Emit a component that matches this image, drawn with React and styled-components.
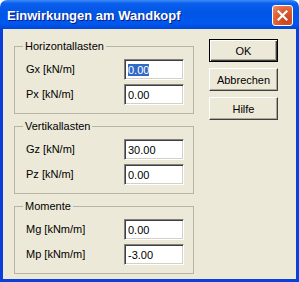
import React from 'react';
import styled, { createGlobalStyle } from 'styled-components';

const Global = createGlobalStyle`
  html, body { margin: 0; padding: 0; background: #ffffff; }
  * { box-sizing: border-box; }
`;

const groups = [
  { title: 'Horizontallasten', rows: [['Gx [kN/m]', '0.00', true], ['Px [kN/m]', '0.00']] },
  { title: 'Vertikallasten', rows: [['Gz [kN/m]', '30.00'], ['Pz [kN/m]', '0.00']] },
  { title: 'Momente', rows: [['Mg [kNm/m]', '0.00'], ['Mp [kNm/m]', '-3.00']] },
];

const App = () => {
  return (
    <>
      <Global />
      <Window>
        <TitleBar>
          <Title>Einwirkungen am Wandkopf</Title>
          <CloseButton>
            <svg width="11" height="11" viewBox="0 0 11 11">
              <path d="M1.5 1.5 L9.5 9.5 M9.5 1.5 L1.5 9.5" stroke="#fff" strokeWidth="2.2" strokeLinecap="square" />
            </svg>
          </CloseButton>
        </TitleBar>
        <Frame>
          <Groups>
            {groups.map((g) => (
              <Group key={g.title}>
                <Legend>{g.title}</Legend>
                {g.rows.map(([label, value, selected]) => (
                  <Row key={label}>
                    <Label>{label}</Label>
                    <Field>
                      {selected ? <Selection>{value}</Selection> : value}
                    </Field>
                  </Row>
                ))}
              </Group>
            ))}
          </Groups>
          <Buttons>
            <Button $default>OK</Button>
            <Button>Abbrechen</Button>
            <Button>Hilfe</Button>
          </Buttons>
        </Frame>
      </Window>
    </>
  );
};

const Window = styled.div`
width: 299px;
height: 282px;
display: flex;
flex-direction: column;
font-family: "Liberation Sans", Arial, sans-serif;
font-size: 11px;
color: #000;
`;

const TitleBar = styled.div`
height: 29px;
flex: none;
display: flex;
align-items: center;
justify-content: space-between;
padding: 1px 6px 0 7px;
border-radius: 7px 7px 0 0;
background: linear-gradient(to bottom, #3f8cf3 0%, #0a5fef 12%, #0055e5 45%, #0058ee 80%, #0047d8 100%);
`;

const Title = styled.span`
color: #fff;
font-weight: bold;
font-size: 13px;
text-shadow: 1px 1px 0 #0a1a80;
`;

const CloseButton = styled.div`
width: 21px;
height: 21px;
border: 1px solid #fff;
border-radius: 3px;
background: radial-gradient(circle at 70% 75%, #c8401a 0%, #de5f34 55%, #ee9070 100%);
display: flex;
align-items: center;
justify-content: center;
`;

const Frame = styled.div`
flex: 1;
display: flex;
gap: 15px;
padding: 10px 0 0 11px;
background: #ece9d8;
border: 3px solid #0a3fd9;
border-top: none;
`;

const Groups = styled.div`
display: flex;
flex-direction: column;
gap: 6px;
width: 180px;
padding-top: 1px;
`;

const Group = styled.fieldset`
margin: 0;
padding: 6px 9px 8px 11px;
border: 1px solid #b8b5a6;
display: flex;
flex-direction: column;
gap: 4px;
`;

const Legend = styled.legend`
padding: 0 2px;
margin-left: -3px;
line-height: 13px;
`;

const Row = styled.div`
display: flex;
align-items: center;
justify-content: space-between;
`;

const Label = styled.span`
line-height: 13px;
`;

const Field = styled.div`
width: 60px;
height: 21px;
background: #fff;
border: 1px solid;
border-color: #808080 #ffffff #ffffff #808080;
box-shadow: inset 1px 1px 0 #404040, inset -1px -1px 0 #d4d0c8;
padding: 3px 0 0 3px;
line-height: 14px;
`;

const Selection = styled.span`
background: #316ac5;
color: #fff;
`;

const Buttons = styled.div`
display: flex;
flex-direction: column;
gap: 6px;
`;

const Button = styled.div`
width: 69px;
height: 23px;
display: flex;
align-items: center;
justify-content: center;
background: #ece9d8;
border: 1px solid;
border-color: ${(p) => (p.$default ? '#000 #000 #000 #000' : '#fff #404040 #404040 #fff')};
box-shadow: ${(p) => (p.$default
    ? 'inset 1px 1px 0 #fff, inset -1px -1px 0 #404040, inset -2px -2px 0 #aca899'
    : 'inset -1px -1px 0 #aca899')};
`;

export default App;
